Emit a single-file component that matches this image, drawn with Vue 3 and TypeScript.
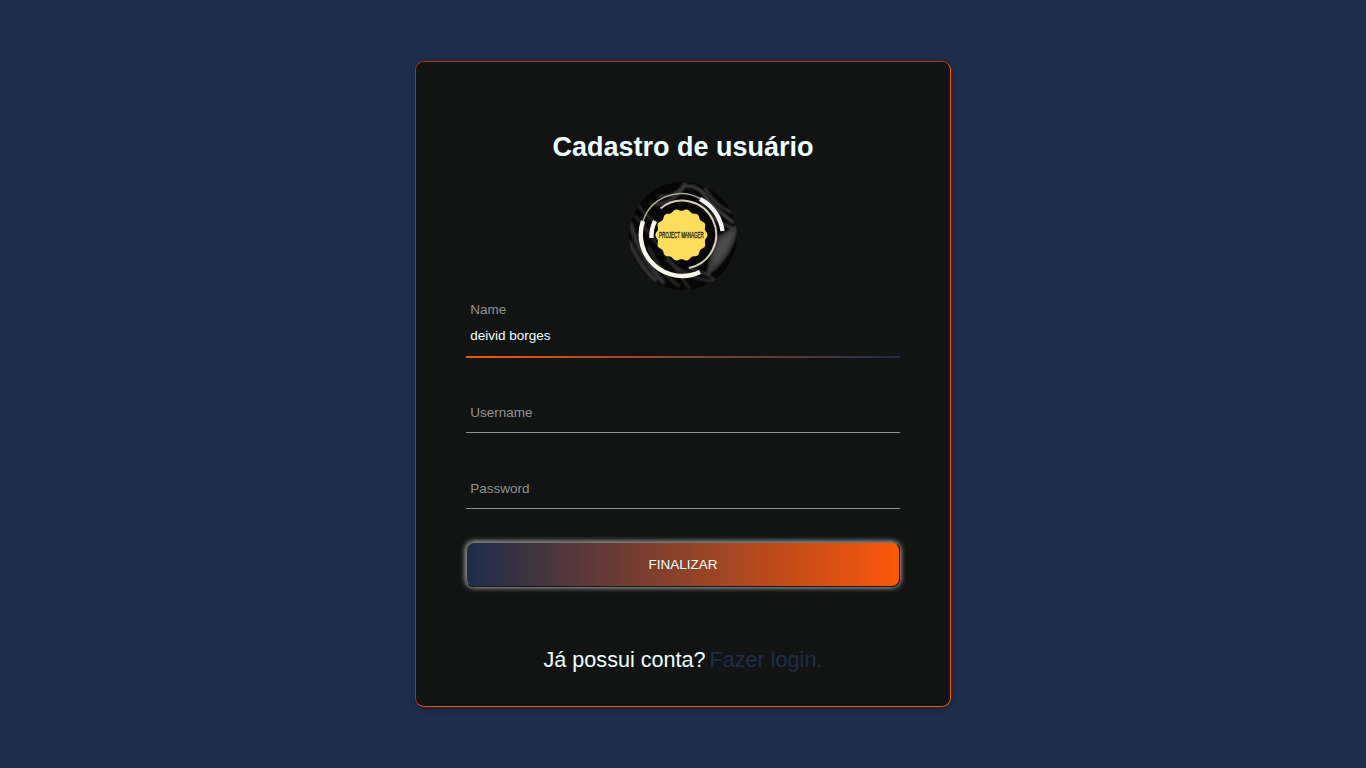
<script setup lang="ts">
import { ref } from 'vue'

interface Field {
  id: string
  label: string
  type: string
}

const fields: Field[] = [
  { id: 'name', label: 'Name', type: 'text' },
  { id: 'username', label: 'Username', type: 'text' },
  { id: 'password', label: 'Password', type: 'password' },
]

const values = ref<Record<string, string>>({ name: 'deivid borges', username: '', password: '' })

// Scalloped seal: the radius oscillates once per lobe.
const sealPath = ((): string => {
  const points: string[] = []
  for (let deg = 0; deg < 360; deg += 2) {
    const a = (deg * Math.PI) / 180
    const r = 25.1 + 0.95 * Math.cos(14 * a)
    points.push(`${(52.4 + r * Math.cos(a)).toFixed(2)} ${(53 + r * Math.sin(a)).toFixed(2)}`)
  }
  return `M${points.join('L')}Z`
})()
</script>

<template>
  <main class="page">
    <form class="card" @submit.prevent>
      <h1 class="title">Cadastro de usuário</h1>
      <svg class="logo" viewBox="0 0 108 108" role="img" aria-label="Project Manager">
        <defs>
          <clipPath id="disc"><circle cx="54" cy="54" r="54" /></clipPath>
          <filter id="soft" x="-30%" y="-30%" width="160%" height="160%"><feGaussianBlur stdDeviation="1.3" /></filter>
        </defs>
        <g clip-path="url(#disc)">
          <rect width="108" height="108" fill="#060606" />
          <g filter="url(#soft)" fill="none" stroke-linecap="round">
            <path d="M22 22Q42 24 56 4M30 14Q48 15 56 1" stroke="#3c3c3c" stroke-width="2.500" />
            <path d="M58 4Q70 4 76 14T104 40" stroke="#444" stroke-width="3" />
            <path d="M76 6Q86 24 102 30M72 22Q84 40 104 46" stroke="#3a3a3a" stroke-width="2.500" />
            <path d="M2 42Q8 70 34 100M0 60Q14 88 26 98" stroke="#333" stroke-width="4.500" />
            <path d="M10 24Q16 34 30 42M6 34Q30 62 60 106" stroke="#272727" stroke-width="3" />
            <path d="M107 46Q102 74 80 90Q84 68 90 56Z" fill="#4c4c4c" stroke="#3a3a3a" stroke-width="4" />
            <path d="M38 78Q58 96 86 100M60 86Q76 90 86 98" stroke="#303030" stroke-width="2.500" />
            <path d="M20 66Q32 92 50 104" stroke="#2e2e2e" stroke-width="2.500" />
          </g>
          <g fill="none">
            <path d="M14 39A40 40 0 0 1 72 17" stroke="#aaa695" stroke-width="1.500" />
            <path d="M31.500 26.500A34 34 0 1 1 60 86" stroke="#d2ceb5" stroke-width="2" />
            <path d="M14 39A41.500 41.500 0 0 0 71 90" stroke="#f8f6ed" stroke-width="4.400" />
            <path d="M71 17A42 42 0 0 1 93.500 49" stroke="#f2f2ee" stroke-width="4.400" />
            <path d="M26 39Q22 47 22.500 56" stroke="#f8f6ed" stroke-width="4.400" />
          </g>
          <path :d="sealPath" fill="#fddd5c" />
          <text class="logo-text" transform="translate(30 55.800) scale(0.590 1)" textLength="76" lengthAdjust="spacingAndGlyphs">PROJECT MANAGER</text>
        </g>
      </svg>

      <div v-for="field in fields" :key="field.id" class="field" :class="{ filled: values[field.id] }">
        <label class="label" :for="field.id">{{ field.label }}</label>
        <input :id="field.id" v-model="values[field.id]" class="input" :type="field.type" />
        <span class="line"></span>
      </div>

      <button class="submit" type="submit">FINALIZAR</button>
      <p class="footer"><span>Já possui conta?</span><a class="link">Fazer login.</a></p>
    </form>
  </main>
</template>

<style>
body {
  margin: 0;
}
</style>

<style scoped>
.page {
  display: flex;
  justify-content: center;
  align-items: center;
  box-sizing: border-box;
  height: 768px;
  background: #1e2d4a;
  font-family: "Liberation Sans", Arial, sans-serif;
  color: azure;
}

.card {
  box-sizing: border-box;
  width: 536px;
  height: 646px;
  padding: 69px 50px 0;
  display: flex;
  flex-direction: column;
  background: #121413;
  border: 1px solid;
  border-color: #a63905 #f95608 #f95608 #a63905;
  border-radius: 9px;
  box-shadow: 0 2px 6px rgba(0, 0, 0, 0.3);
}

.title {
  margin: 0;
  text-align: center;
  font-size: 27px;
  line-height: 32px;
}

.logo {
  width: 108px;
  height: 108px;
  margin: 19px auto 0;
  flex: none;
}

.logo-text {
  font-family: "Liberation Sans", Arial, sans-serif;
  font-size: 8.2px;
  fill: #1c190f;
  stroke: #1c190f;
  stroke-width: 0.3px;
}

.field {
  display: flex;
  flex-direction: column;
  position: relative;
  height: 34px;
  padding-top: 42px;
}

.label {
  position: absolute;
  left: 4.2px;
  top: 48px;
  font-size: 13.5px;
  line-height: 16px;
  color: #919392;
}

.input {
  box-sizing: border-box;
  width: 100%;
  height: 33px;
  flex: none;
  margin: 0;
  padding: 0 4.2px 9px;
  border: 0;
  outline: 0;
  background: transparent;
  color: azure;
  font: 13.5px "Liberation Sans", Arial, sans-serif;
}

.line {
  height: 1px;
  background: #919392;
}

.filled {
  height: 34px;
  padding-top: 33px;
}

.filled .label {
  top: 12px;
}

.filled .line {
  height: 2px;
  flex: none;
  background: linear-gradient(to right, #f95608, #1e2d4a);
}

.submit {
  box-sizing: border-box;
  width: 434px;
  height: 45px;
  margin: 33px 0 0;
  padding: 0;
  border: 1px solid;
  border-color: #737573 #1b1b1b #1b1b1b #737573;
  border-radius: 8px;
  background: linear-gradient(to right, #1e2d4a, #fc5708);
  box-shadow: 0 0 5px 1px #a5a7a6;
  color: azure;
  font: 13.5px "Liberation Sans", Arial, sans-serif;
}

.footer {
  display: flex;
  justify-content: center;
  gap: 4px;
  margin: 60px 0 0;
  font-size: 21.6px;
  line-height: 25px;
}

.link {
  color: #1e2d4a;
}
</style>
